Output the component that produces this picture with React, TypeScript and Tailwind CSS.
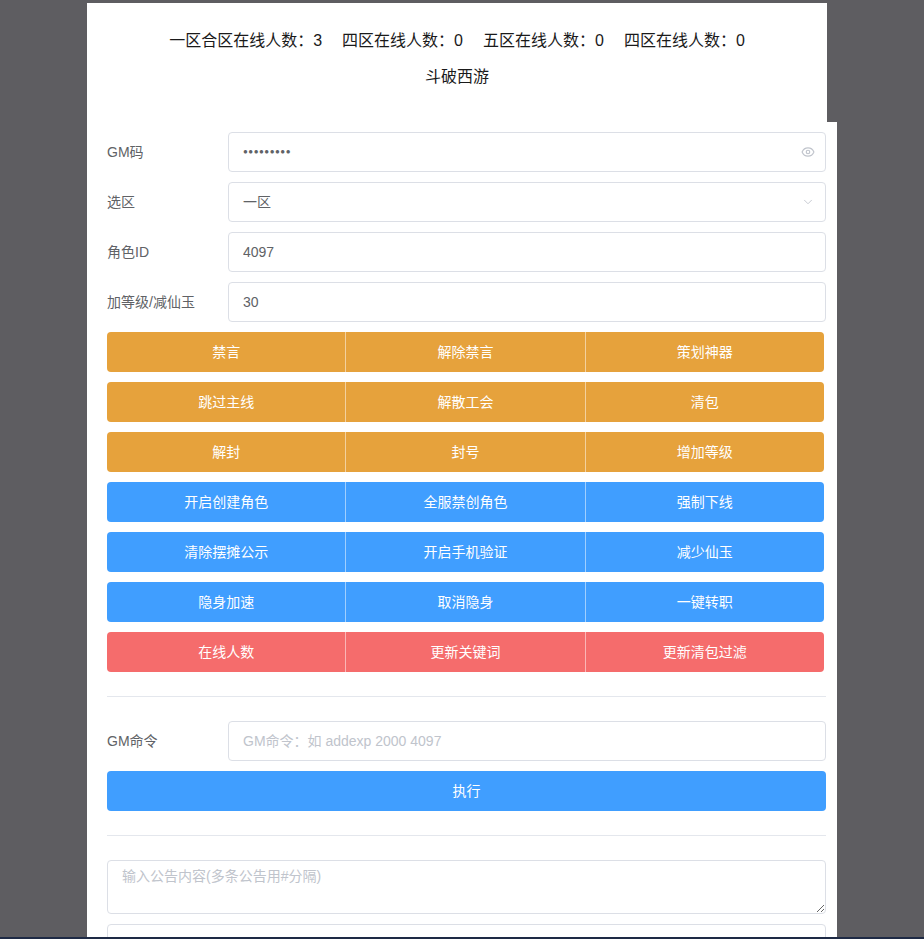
import { Eye, ChevronDown } from "lucide-react";

const rows = [
    { color: "bg-[#e6a23c]", items: ["禁言", "解除禁言", "策划神器"] },
    { color: "bg-[#e6a23c]", items: ["跳过主线", "解散工会", "清包"] },
    { color: "bg-[#e6a23c]", items: ["解封", "封号", "增加等级"] },
    { color: "bg-[#409eff]", items: ["开启创建角色", "全服禁创角色", "强制下线"] },
    { color: "bg-[#409eff]", items: ["清除摆摊公示", "开启手机验证", "减少仙玉"] },
    { color: "bg-[#409eff]", items: ["隐身加速", "取消隐身", "一键转职"] },
    { color: "bg-[#f56c6c]", items: ["在线人数", "更新关键词", "更新清包过滤"] },
];

const FormRow = ({ label, children }: { label: string; children: React.ReactNode }) => (
    <div className="flex h-10 mb-[10px]">
        <div className="w-[121px] text-sm leading-10 text-[#606266]">{label}</div>
        <div className="flex-1 relative">{children}</div>
    </div>
);

const inputCls = "w-full h-10 border border-[#dcdfe6] rounded px-[14px] text-sm text-[#606266] placeholder:text-[#c0c4cc] outline-none bg-white";

export default function App() {
    return (
        <div className="h-screen flex flex-col bg-[#5e5d61] overflow-hidden" style={{ fontFamily: '"Liberation Sans", "Noto Sans CJK SC", sans-serif' }}>
            <div className="flex-1 overflow-hidden pl-[87px] pt-[3px]">
                <div className="w-[740px] h-[119px] bg-white text-center text-base text-[#1a1a1a] pt-[26px]">
                    <div className="leading-6">
                        <span>一区合区在线人数：3</span>
                        <span className="ml-5">四区在线人数：0</span>
                        <span className="ml-5">五区在线人数：0</span>
                        <span className="ml-5">四区在线人数：0</span>
                    </div>
                    <div className="leading-6 mt-3">斗破西游</div>
                </div>
                <div className="w-[750px] bg-white pl-5 pr-[11px] pt-[10px] pb-10">
                    <FormRow label="GM码">
                        <div className={inputCls + " flex items-center text-[8px] tracking-[0.5px] text-[#606266]"}>●●●●●●●●●</div>
                        <Eye className="absolute right-[11px] top-[13px] w-[14px] h-[14px] text-[#c0c4cc]" strokeWidth={2} />
                    </FormRow>
                    <FormRow label="选区">
                        <div className={inputCls + " flex items-center"}>一区</div>
                        <ChevronDown className="absolute right-[11px] top-[13px] w-[14px] h-[14px] text-[#c0c4cc]" strokeWidth={1.5} />
                    </FormRow>
                    <FormRow label="角色ID">
                        <input className={inputCls} defaultValue="4097" readOnly />
                    </FormRow>
                    <FormRow label="加等级/减仙玉">
                        <input className={inputCls} defaultValue="30" readOnly />
                    </FormRow>
                    <div className="pr-[2px] flex flex-col gap-[10px]">
                        {rows.map((row, i) => (
                            <div key={i} className={`flex h-10 rounded overflow-hidden ${row.color}`}>
                                {row.items.map((t, j) => (
                                    <button key={j} className={`flex-1 text-sm text-white ${j > 0 ? "border-l border-white/50" : ""}`}>{t}</button>
                                ))}
                            </div>
                        ))}
                    </div>
                    <div className="h-px bg-[#e4e7ed] my-6" />
                    <FormRow label="GM命令">
                        <input className={inputCls} placeholder="GM命令：如 addexp 2000 4097" />
                    </FormRow>
                    <button className="w-full h-10 rounded bg-[#409eff] text-white text-sm">执行</button>
                    <div className="h-px bg-[#e4e7ed] my-6" />
                    <textarea className="block w-full h-[54px] border border-[#dcdfe6] rounded px-[14px] py-[5px] text-sm text-[#606266] placeholder:text-[#c0c4cc] outline-none" placeholder="输入公告内容(多条公告用#分隔)" />
                    <div className="mt-[10px] h-10 border border-[#dcdfe6] rounded" />
                </div>
            </div>
            <div className="h-[2px] bg-[#1e2a45]" />
        </div>
    );
}
